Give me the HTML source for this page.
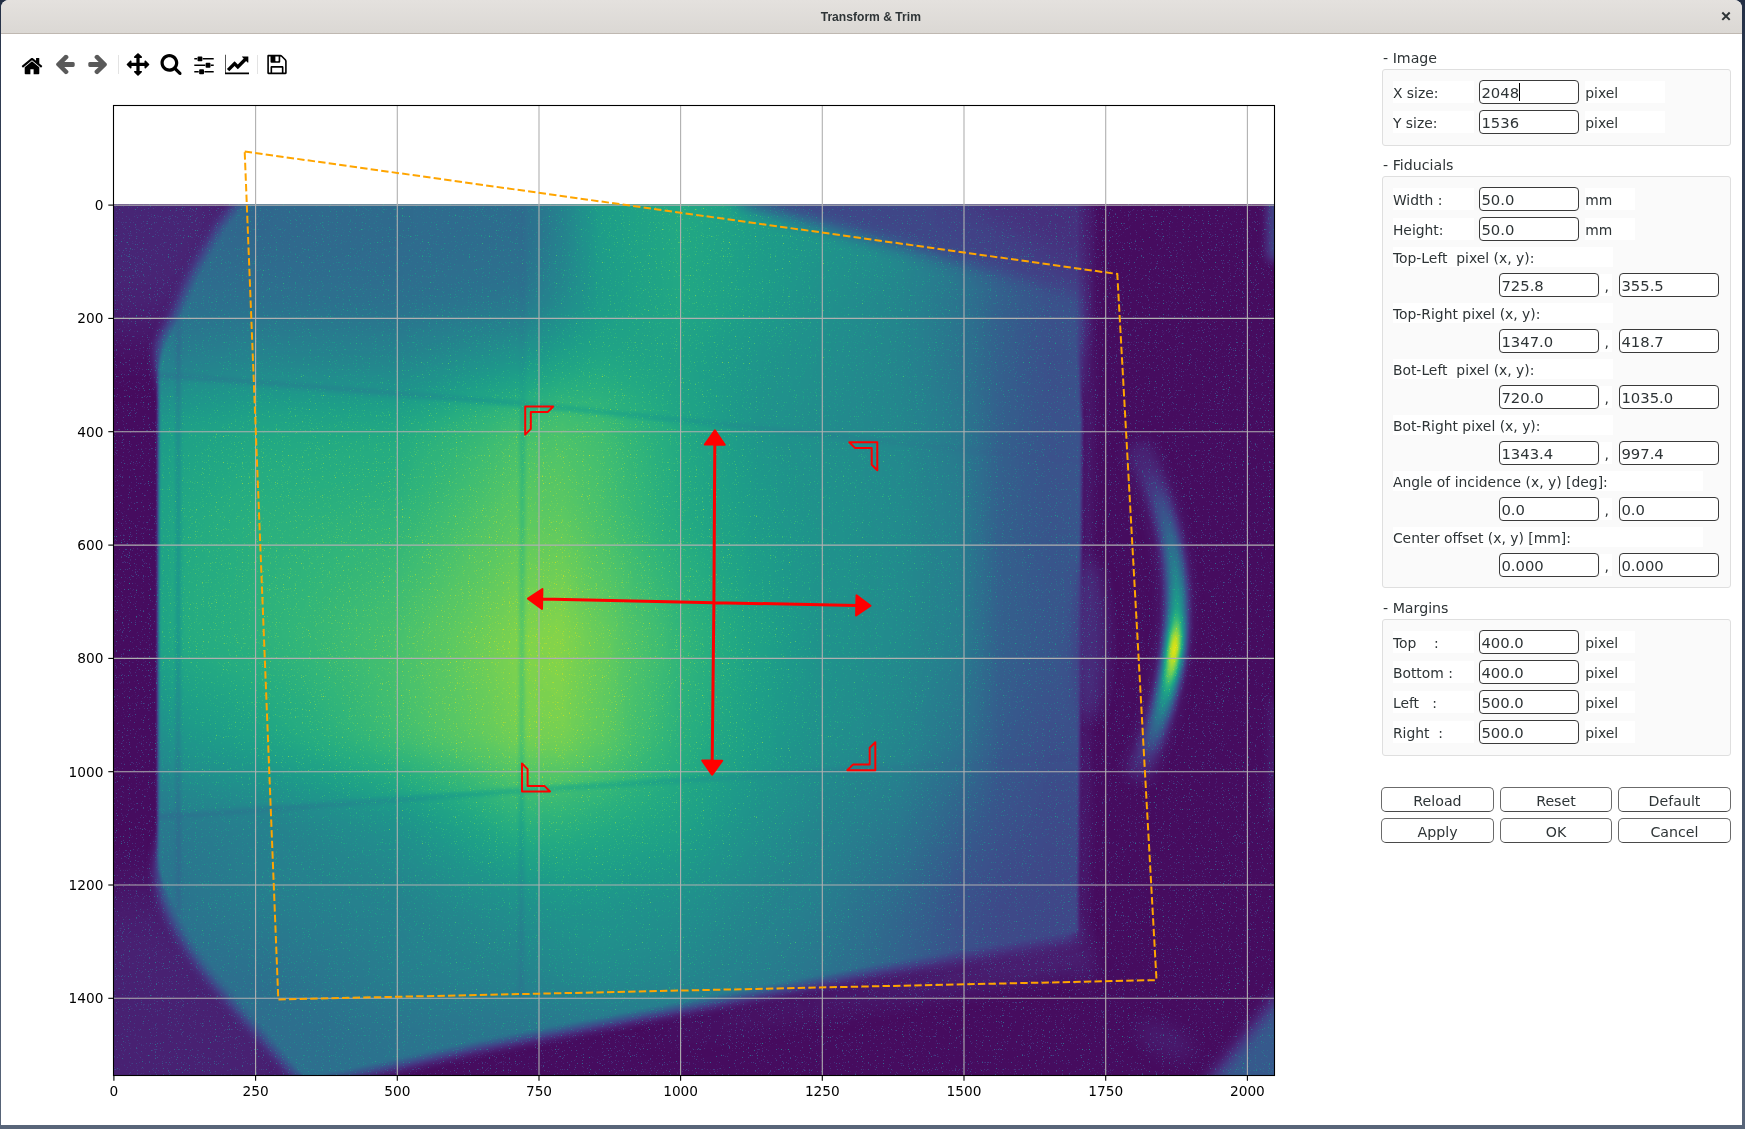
<!DOCTYPE html><html><head><meta charset="utf-8"><title>Transform &amp; Trim</title><style>
*{box-sizing:border-box;margin:0;padding:0}
html,body{width:1745px;height:1129px;overflow:hidden;background:#4f5b70}
body{position:relative;font-family:"DejaVu Sans","Liberation Sans",sans-serif;font-size:14px;color:#2e3436}
.desk{position:absolute;left:0;top:0;width:1745px;height:1129px;background:linear-gradient(180deg,#222e44 0,#2e3a50 60px,#3a475d 600px,#586579 1129px)}
.win{position:absolute;left:1px;top:0;width:1741px;height:1125px;background:#fff;border-radius:8px 8px 0 0;overflow:hidden}
.tb{position:absolute;left:0;top:0;width:100%;height:34px;background:linear-gradient(180deg,#e4e1de,#dbd8d4);border-bottom:1px solid #bfb8b1}
.tt{position:absolute;left:0;width:1741px;top:9.5px;text-align:center;font-family:"Liberation Sans","DejaVu Sans",sans-serif;font-weight:bold;font-size:12.9px;line-height:14px;color:#2e3436;transform:scaleX(.94);transform-origin:869.5px 0}
.plot{position:absolute;left:0;top:0}
.gs{position:absolute;left:0;top:0;width:1745px;height:1129px;opacity:.999}
.ic{position:absolute;top:52px;width:24px;height:24px}
.sep{position:absolute;top:55px;width:1px;height:19px;background:#e3e3e3}
.gt{position:absolute;left:1383px;font-size:14.2px;line-height:18px;white-space:pre}
.fr{position:absolute;left:1382px;width:349px;background:#fafafa;border:1px solid #dfdfdf;border-radius:3px}
.lb{position:absolute;height:22px;line-height:22px;overflow:visible;background:#fff;white-space:pre}
.in{position:absolute;height:24px;width:100px;border:1px solid #3a3a3a;border-radius:4px;background:#fff;line-height:25.6px;padding-left:2px;white-space:pre;font-size:14.4px;overflow:hidden}
.bt{position:absolute;height:25px;border:1px solid #6b6b6b;border-bottom-color:#4a4a4a;border-radius:5px;background:#fff;text-align:center;line-height:24px;font-size:14.2px}
.cur{position:absolute;width:1px;height:18px;background:#000}
</style></head><body><div class="desk"></div><div class="win"></div><div class="tb" style="left:1px;width:1741px;border-radius:8px 8px 0 0"></div><svg style="position:absolute;left:1720px;top:10px" width="12" height="12" viewBox="0 0 12 12"><path d="M2.3,2.5L9.7,9.9M9.7,2.5L2.3,9.9" stroke="#2e3436" stroke-width="2" fill="none"/></svg><svg class="plot" width="1745" height="1129" viewBox="0 0 1745 1129"><defs><filter id="vir" filterUnits="userSpaceOnUse" x="113" y="204" width="1162" height="872" color-interpolation-filters="sRGB"><feTurbulence type="fractalNoise" baseFrequency="0.85" numOctaves="1" seed="7" result="n"/><feColorMatrix in="n" type="matrix" values="5 0 0 0 -3.2  5 0 0 0 -3.2  5 0 0 0 -3.2  0 0 0 0 1" result="nn"/><feComposite in="SourceGraphic" in2="nn" operator="arithmetic" k1="-0.3" k2="1" k3="0.4" k4="0"/><feComponentTransfer><feFuncR type="table" tableValues="0.267 0.277 0.282 0.283 0.279 0.271 0.259 0.245 0.230 0.214 0.199 0.186 0.173 0.161 0.149 0.138 0.128 0.121 0.121 0.132 0.158 0.197 0.246 0.304 0.369 0.440 0.516 0.596 0.678 0.762 0.846 0.926 0.993"/><feFuncG type="table" tableValues="0.005 0.050 0.095 0.136 0.175 0.214 0.252 0.288 0.322 0.356 0.388 0.419 0.449 0.479 0.508 0.537 0.567 0.596 0.626 0.655 0.684 0.712 0.739 0.765 0.789 0.811 0.831 0.849 0.864 0.876 0.887 0.897 0.906"/><feFuncB type="table" tableValues="0.329 0.376 0.417 0.453 0.483 0.507 0.525 0.537 0.546 0.551 0.555 0.557 0.558 0.558 0.557 0.555 0.551 0.544 0.533 0.520 0.502 0.479 0.452 0.420 0.383 0.341 0.294 0.243 0.190 0.137 0.100 0.104 0.144"/></feComponentTransfer></filter><filter id="b2" filterUnits="userSpaceOnUse" x="0" y="100" width="1400" height="1100" color-interpolation-filters="sRGB"><feGaussianBlur stdDeviation="1.8"/></filter><filter id="b4" filterUnits="userSpaceOnUse" x="0" y="100" width="1400" height="1100" color-interpolation-filters="sRGB"><feGaussianBlur stdDeviation="4"/></filter><filter id="b8" filterUnits="userSpaceOnUse" x="0" y="100" width="1400" height="1100" color-interpolation-filters="sRGB"><feGaussianBlur stdDeviation="8"/></filter><filter id="b16" filterUnits="userSpaceOnUse" x="0" y="100" width="1400" height="1100" color-interpolation-filters="sRGB"><feGaussianBlur stdDeviation="16"/></filter><filter id="b30" filterUnits="userSpaceOnUse" x="0" y="100" width="1400" height="1100" color-interpolation-filters="sRGB"><feGaussianBlur stdDeviation="30"/></filter><filter id="bv" filterUnits="userSpaceOnUse" x="0" y="100" width="1400" height="1100" color-interpolation-filters="sRGB"><feGaussianBlur stdDeviation="0 14"/></filter><filter id="b5" filterUnits="userSpaceOnUse" x="0" y="100" width="1400" height="1100" color-interpolation-filters="sRGB"><feGaussianBlur stdDeviation="5"/></filter><filter id="b6" filterUnits="userSpaceOnUse" x="0" y="100" width="1400" height="1100" color-interpolation-filters="sRGB"><feGaussianBlur stdDeviation="6"/></filter><clipPath id="imc"><rect x="113.5" y="204.6" width="1161" height="871"/></clipPath><clipPath id="axc"><rect x="113.5" y="105.5" width="1161" height="970"/></clipPath><clipPath id="wc"><path d="M256,190 L1077,190 L1076.5,330 L1082,420 L1078,932 L874,965 L480,1040.5 L330,1073 L310,1084 L221,976 C208,960 193,939 180,916 C172,899 160,885 158,858 L158.5,372 C160,352 166,344 170,337 L179,320 L188,302 L195,285 L204,267 L215,248 L227,227 Z"/></clipPath><clipPath id="wf"><path d="M246,190 L1084,190 L1083.5,330 L1079,380 L1068,430 L1066,880 L1072,915 L1077,939 L874,972 L480,1047.5 L338,1079 L297,1078 L213,982 C200,966 185,945 172,921 C165,905 158,890 158,868 L160,850 L166,825 L174,800 L174,420 L166,395 L160,372 L158.5,356 C159,345 160,341 161.7,338 L171.5,320.5 L180,302.7 L187.4,285 L196,267 L207,247.8 L219,226.6 Z"/></clipPath><clipPath id="soft"><path d="M90,180 L1300,180 L1300,1100 L90,1100 Z"/></clipPath><linearGradient id="r0" gradientUnits="userSpaceOnUse" x1="150" y1="0" x2="1100" y2="0"><stop offset="0.0000" stop-color="#545454"/><stop offset="0.0211" stop-color="#545454"/><stop offset="0.1158" stop-color="#545454"/><stop offset="0.2632" stop-color="#575757"/><stop offset="0.3895" stop-color="#595959"/><stop offset="0.4316" stop-color="#6e6e6e"/><stop offset="0.4737" stop-color="#8c8c8c"/><stop offset="0.5579" stop-color="#999999"/><stop offset="0.6421" stop-color="#8c8c8c"/><stop offset="0.7074" stop-color="#858585"/><stop offset="0.7895" stop-color="#787878"/><stop offset="0.8526" stop-color="#666666"/><stop offset="0.8947" stop-color="#525252"/><stop offset="0.9474" stop-color="#474747"/><stop offset="1.0000" stop-color="#474747"/></linearGradient><linearGradient id="r1" gradientUnits="userSpaceOnUse" x1="150" y1="0" x2="1100" y2="0"><stop offset="0.0000" stop-color="#545454"/><stop offset="0.0211" stop-color="#545454"/><stop offset="0.1158" stop-color="#545454"/><stop offset="0.2632" stop-color="#575757"/><stop offset="0.3895" stop-color="#595959"/><stop offset="0.4316" stop-color="#6e6e6e"/><stop offset="0.4737" stop-color="#8c8c8c"/><stop offset="0.5579" stop-color="#999999"/><stop offset="0.6421" stop-color="#8c8c8c"/><stop offset="0.7074" stop-color="#858585"/><stop offset="0.7895" stop-color="#787878"/><stop offset="0.8526" stop-color="#666666"/><stop offset="0.8947" stop-color="#525252"/><stop offset="0.9474" stop-color="#474747"/><stop offset="1.0000" stop-color="#474747"/></linearGradient><linearGradient id="r2" gradientUnits="userSpaceOnUse" x1="150" y1="0" x2="1100" y2="0"><stop offset="0.0000" stop-color="#545454"/><stop offset="0.0211" stop-color="#545454"/><stop offset="0.1158" stop-color="#545454"/><stop offset="0.2632" stop-color="#575757"/><stop offset="0.3895" stop-color="#595959"/><stop offset="0.4316" stop-color="#6e6e6e"/><stop offset="0.4737" stop-color="#8c8c8c"/><stop offset="0.5579" stop-color="#999999"/><stop offset="0.6421" stop-color="#8c8c8c"/><stop offset="0.7074" stop-color="#858585"/><stop offset="0.7895" stop-color="#787878"/><stop offset="0.8526" stop-color="#666666"/><stop offset="0.8947" stop-color="#525252"/><stop offset="0.9474" stop-color="#474747"/><stop offset="1.0000" stop-color="#474747"/></linearGradient><linearGradient id="r3" gradientUnits="userSpaceOnUse" x1="150" y1="0" x2="1100" y2="0"><stop offset="0.0000" stop-color="#545454"/><stop offset="0.0211" stop-color="#545454"/><stop offset="0.1158" stop-color="#545454"/><stop offset="0.2632" stop-color="#575757"/><stop offset="0.3895" stop-color="#595959"/><stop offset="0.4316" stop-color="#6e6e6e"/><stop offset="0.4737" stop-color="#8c8c8c"/><stop offset="0.5579" stop-color="#999999"/><stop offset="0.6421" stop-color="#8c8c8c"/><stop offset="0.7074" stop-color="#858585"/><stop offset="0.7895" stop-color="#787878"/><stop offset="0.8526" stop-color="#666666"/><stop offset="0.8947" stop-color="#525252"/><stop offset="0.9474" stop-color="#474747"/><stop offset="1.0000" stop-color="#474747"/></linearGradient><linearGradient id="r4" gradientUnits="userSpaceOnUse" x1="150" y1="0" x2="1100" y2="0"><stop offset="0.0000" stop-color="#565656"/><stop offset="0.0211" stop-color="#565656"/><stop offset="0.1158" stop-color="#575757"/><stop offset="0.2632" stop-color="#585858"/><stop offset="0.3895" stop-color="#5c5c5c"/><stop offset="0.4316" stop-color="#707070"/><stop offset="0.4737" stop-color="#8b8b8b"/><stop offset="0.5579" stop-color="#999999"/><stop offset="0.6421" stop-color="#8c8c8c"/><stop offset="0.7074" stop-color="#838383"/><stop offset="0.7895" stop-color="#767676"/><stop offset="0.8526" stop-color="#646464"/><stop offset="0.8947" stop-color="#505050"/><stop offset="0.9474" stop-color="#454545"/><stop offset="1.0000" stop-color="#454545"/></linearGradient><linearGradient id="r5" gradientUnits="userSpaceOnUse" x1="150" y1="0" x2="1100" y2="0"><stop offset="0.0000" stop-color="#585858"/><stop offset="0.0211" stop-color="#585858"/><stop offset="0.1158" stop-color="#5a5a5a"/><stop offset="0.2632" stop-color="#5a5a5a"/><stop offset="0.3895" stop-color="#5f5f5f"/><stop offset="0.4316" stop-color="#737373"/><stop offset="0.4737" stop-color="#8a8a8a"/><stop offset="0.5579" stop-color="#999999"/><stop offset="0.6421" stop-color="#8c8c8c"/><stop offset="0.7074" stop-color="#818181"/><stop offset="0.7895" stop-color="#747474"/><stop offset="0.8526" stop-color="#626262"/><stop offset="0.8947" stop-color="#4e4e4e"/><stop offset="0.9474" stop-color="#424242"/><stop offset="1.0000" stop-color="#424242"/></linearGradient><linearGradient id="r6" gradientUnits="userSpaceOnUse" x1="150" y1="0" x2="1100" y2="0"><stop offset="0.0000" stop-color="#5c5c5c"/><stop offset="0.0211" stop-color="#5c5c5c"/><stop offset="0.1158" stop-color="#5f5f5f"/><stop offset="0.2632" stop-color="#5f5f5f"/><stop offset="0.3895" stop-color="#666666"/><stop offset="0.4316" stop-color="#797979"/><stop offset="0.4737" stop-color="#8b8b8b"/><stop offset="0.5579" stop-color="#989898"/><stop offset="0.6421" stop-color="#8b8b8b"/><stop offset="0.7074" stop-color="#7f7f7f"/><stop offset="0.7895" stop-color="#737373"/><stop offset="0.8526" stop-color="#616161"/><stop offset="0.8947" stop-color="#4c4c4c"/><stop offset="0.9474" stop-color="#3f3f3f"/><stop offset="1.0000" stop-color="#3f3f3f"/></linearGradient><linearGradient id="r7" gradientUnits="userSpaceOnUse" x1="150" y1="0" x2="1100" y2="0"><stop offset="0.0000" stop-color="#636363"/><stop offset="0.0211" stop-color="#636363"/><stop offset="0.1158" stop-color="#686868"/><stop offset="0.2632" stop-color="#686868"/><stop offset="0.3895" stop-color="#747474"/><stop offset="0.4316" stop-color="#848484"/><stop offset="0.4737" stop-color="#909090"/><stop offset="0.5579" stop-color="#959595"/><stop offset="0.6421" stop-color="#888888"/><stop offset="0.7074" stop-color="#7e7e7e"/><stop offset="0.7895" stop-color="#737373"/><stop offset="0.8526" stop-color="#616161"/><stop offset="0.8947" stop-color="#4c4c4c"/><stop offset="0.9474" stop-color="#3e3e3e"/><stop offset="1.0000" stop-color="#3e3e3e"/></linearGradient><linearGradient id="r8" gradientUnits="userSpaceOnUse" x1="150" y1="0" x2="1100" y2="0"><stop offset="0.0000" stop-color="#6a6a6a"/><stop offset="0.0211" stop-color="#6a6a6a"/><stop offset="0.1158" stop-color="#717171"/><stop offset="0.2632" stop-color="#717171"/><stop offset="0.3895" stop-color="#828282"/><stop offset="0.4316" stop-color="#8f8f8f"/><stop offset="0.4737" stop-color="#969696"/><stop offset="0.5579" stop-color="#929292"/><stop offset="0.6421" stop-color="#858585"/><stop offset="0.7074" stop-color="#7d7d7d"/><stop offset="0.7895" stop-color="#737373"/><stop offset="0.8526" stop-color="#616161"/><stop offset="0.8947" stop-color="#4c4c4c"/><stop offset="0.9474" stop-color="#3d3d3d"/><stop offset="1.0000" stop-color="#3d3d3d"/></linearGradient><linearGradient id="r9" gradientUnits="userSpaceOnUse" x1="150" y1="0" x2="1100" y2="0"><stop offset="0.0000" stop-color="#747474"/><stop offset="0.0211" stop-color="#757575"/><stop offset="0.1158" stop-color="#7c7c7c"/><stop offset="0.2632" stop-color="#7d7d7d"/><stop offset="0.3895" stop-color="#919191"/><stop offset="0.4316" stop-color="#9b9b9b"/><stop offset="0.4737" stop-color="#9d9d9d"/><stop offset="0.5579" stop-color="#939393"/><stop offset="0.6421" stop-color="#848484"/><stop offset="0.7074" stop-color="#7c7c7c"/><stop offset="0.7895" stop-color="#737373"/><stop offset="0.8526" stop-color="#626262"/><stop offset="0.8947" stop-color="#4c4c4c"/><stop offset="0.9474" stop-color="#3e3e3e"/><stop offset="1.0000" stop-color="#3e3e3e"/></linearGradient><linearGradient id="r10" gradientUnits="userSpaceOnUse" x1="150" y1="0" x2="1100" y2="0"><stop offset="0.0000" stop-color="#7e7e7e"/><stop offset="0.0211" stop-color="#808080"/><stop offset="0.1158" stop-color="#888888"/><stop offset="0.2632" stop-color="#898989"/><stop offset="0.3895" stop-color="#a0a0a0"/><stop offset="0.4316" stop-color="#a6a6a6"/><stop offset="0.4737" stop-color="#a5a5a5"/><stop offset="0.5579" stop-color="#959595"/><stop offset="0.6421" stop-color="#838383"/><stop offset="0.7074" stop-color="#7b7b7b"/><stop offset="0.7895" stop-color="#747474"/><stop offset="0.8526" stop-color="#646464"/><stop offset="0.8947" stop-color="#4c4c4c"/><stop offset="0.9474" stop-color="#3f3f3f"/><stop offset="1.0000" stop-color="#3f3f3f"/></linearGradient><linearGradient id="r11" gradientUnits="userSpaceOnUse" x1="150" y1="0" x2="1100" y2="0"><stop offset="0.0000" stop-color="#898989"/><stop offset="0.0211" stop-color="#8b8b8b"/><stop offset="0.1158" stop-color="#939393"/><stop offset="0.2632" stop-color="#959595"/><stop offset="0.3895" stop-color="#afafaf"/><stop offset="0.4316" stop-color="#b2b2b2"/><stop offset="0.4737" stop-color="#adadad"/><stop offset="0.5579" stop-color="#969696"/><stop offset="0.6421" stop-color="#828282"/><stop offset="0.7074" stop-color="#7a7a7a"/><stop offset="0.7895" stop-color="#757575"/><stop offset="0.8526" stop-color="#666666"/><stop offset="0.8947" stop-color="#4c4c4c"/><stop offset="0.9474" stop-color="#404040"/><stop offset="1.0000" stop-color="#404040"/></linearGradient><linearGradient id="r12" gradientUnits="userSpaceOnUse" x1="150" y1="0" x2="1100" y2="0"><stop offset="0.0000" stop-color="#8c8c8c"/><stop offset="0.0211" stop-color="#8e8e8e"/><stop offset="0.1158" stop-color="#969696"/><stop offset="0.2632" stop-color="#9a9a9a"/><stop offset="0.3895" stop-color="#b3b3b3"/><stop offset="0.4316" stop-color="#b5b5b5"/><stop offset="0.4737" stop-color="#afafaf"/><stop offset="0.5579" stop-color="#979797"/><stop offset="0.6421" stop-color="#838383"/><stop offset="0.7074" stop-color="#7c7c7c"/><stop offset="0.7895" stop-color="#767676"/><stop offset="0.8526" stop-color="#676767"/><stop offset="0.8947" stop-color="#4c4c4c"/><stop offset="0.9474" stop-color="#404040"/><stop offset="1.0000" stop-color="#404040"/></linearGradient><linearGradient id="r13" gradientUnits="userSpaceOnUse" x1="150" y1="0" x2="1100" y2="0"><stop offset="0.0000" stop-color="#8e8e8e"/><stop offset="0.0211" stop-color="#909090"/><stop offset="0.1158" stop-color="#999999"/><stop offset="0.2632" stop-color="#9d9d9d"/><stop offset="0.3895" stop-color="#b6b6b6"/><stop offset="0.4316" stop-color="#b8b8b8"/><stop offset="0.4737" stop-color="#b0b0b0"/><stop offset="0.5579" stop-color="#989898"/><stop offset="0.6421" stop-color="#858585"/><stop offset="0.7074" stop-color="#7d7d7d"/><stop offset="0.7895" stop-color="#777777"/><stop offset="0.8526" stop-color="#696969"/><stop offset="0.8947" stop-color="#4c4c4c"/><stop offset="0.9474" stop-color="#414141"/><stop offset="1.0000" stop-color="#414141"/></linearGradient><linearGradient id="r14" gradientUnits="userSpaceOnUse" x1="150" y1="0" x2="1100" y2="0"><stop offset="0.0000" stop-color="#909090"/><stop offset="0.0211" stop-color="#929292"/><stop offset="0.1158" stop-color="#9c9c9c"/><stop offset="0.2632" stop-color="#a0a0a0"/><stop offset="0.3895" stop-color="#bababa"/><stop offset="0.4316" stop-color="#bababa"/><stop offset="0.4737" stop-color="#b1b1b1"/><stop offset="0.5579" stop-color="#989898"/><stop offset="0.6421" stop-color="#868686"/><stop offset="0.7074" stop-color="#7e7e7e"/><stop offset="0.7895" stop-color="#777777"/><stop offset="0.8526" stop-color="#6a6a6a"/><stop offset="0.8947" stop-color="#4c4c4c"/><stop offset="0.9474" stop-color="#424242"/><stop offset="1.0000" stop-color="#424242"/></linearGradient><linearGradient id="r15" gradientUnits="userSpaceOnUse" x1="150" y1="0" x2="1100" y2="0"><stop offset="0.0000" stop-color="#919191"/><stop offset="0.0211" stop-color="#949494"/><stop offset="0.1158" stop-color="#9e9e9e"/><stop offset="0.2632" stop-color="#a4a4a4"/><stop offset="0.3895" stop-color="#bdbdbd"/><stop offset="0.4316" stop-color="#bdbdbd"/><stop offset="0.4737" stop-color="#b3b3b3"/><stop offset="0.5579" stop-color="#999999"/><stop offset="0.6421" stop-color="#878787"/><stop offset="0.7074" stop-color="#808080"/><stop offset="0.7895" stop-color="#787878"/><stop offset="0.8526" stop-color="#6b6b6b"/><stop offset="0.8947" stop-color="#4c4c4c"/><stop offset="0.9474" stop-color="#424242"/><stop offset="1.0000" stop-color="#424242"/></linearGradient><linearGradient id="r16" gradientUnits="userSpaceOnUse" x1="150" y1="0" x2="1100" y2="0"><stop offset="0.0000" stop-color="#929292"/><stop offset="0.0211" stop-color="#949494"/><stop offset="0.1158" stop-color="#9f9f9f"/><stop offset="0.2632" stop-color="#a7a7a7"/><stop offset="0.3895" stop-color="#c0c0c0"/><stop offset="0.4316" stop-color="#c1c1c1"/><stop offset="0.4737" stop-color="#b6b6b6"/><stop offset="0.5579" stop-color="#9c9c9c"/><stop offset="0.6421" stop-color="#898989"/><stop offset="0.7074" stop-color="#808080"/><stop offset="0.7895" stop-color="#787878"/><stop offset="0.8526" stop-color="#6b6b6b"/><stop offset="0.8947" stop-color="#4c4c4c"/><stop offset="0.9474" stop-color="#434343"/><stop offset="1.0000" stop-color="#434343"/></linearGradient><linearGradient id="r17" gradientUnits="userSpaceOnUse" x1="150" y1="0" x2="1100" y2="0"><stop offset="0.0000" stop-color="#929292"/><stop offset="0.0211" stop-color="#959595"/><stop offset="0.1158" stop-color="#9f9f9f"/><stop offset="0.2632" stop-color="#aaaaaa"/><stop offset="0.3895" stop-color="#c3c3c3"/><stop offset="0.4316" stop-color="#c4c4c4"/><stop offset="0.4737" stop-color="#b9b9b9"/><stop offset="0.5579" stop-color="#9f9f9f"/><stop offset="0.6421" stop-color="#8a8a8a"/><stop offset="0.7074" stop-color="#808080"/><stop offset="0.7895" stop-color="#787878"/><stop offset="0.8526" stop-color="#6b6b6b"/><stop offset="0.8947" stop-color="#4c4c4c"/><stop offset="0.9474" stop-color="#434343"/><stop offset="1.0000" stop-color="#434343"/></linearGradient><linearGradient id="r18" gradientUnits="userSpaceOnUse" x1="150" y1="0" x2="1100" y2="0"><stop offset="0.0000" stop-color="#939393"/><stop offset="0.0211" stop-color="#969696"/><stop offset="0.1158" stop-color="#a0a0a0"/><stop offset="0.2632" stop-color="#adadad"/><stop offset="0.3895" stop-color="#c6c6c6"/><stop offset="0.4316" stop-color="#c8c8c8"/><stop offset="0.4737" stop-color="#bcbcbc"/><stop offset="0.5579" stop-color="#a1a1a1"/><stop offset="0.6421" stop-color="#8c8c8c"/><stop offset="0.7074" stop-color="#808080"/><stop offset="0.7895" stop-color="#787878"/><stop offset="0.8526" stop-color="#6b6b6b"/><stop offset="0.8947" stop-color="#4c4c4c"/><stop offset="0.9474" stop-color="#444444"/><stop offset="1.0000" stop-color="#444444"/></linearGradient><linearGradient id="r19" gradientUnits="userSpaceOnUse" x1="150" y1="0" x2="1100" y2="0"><stop offset="0.0000" stop-color="#939393"/><stop offset="0.0211" stop-color="#969696"/><stop offset="0.1158" stop-color="#a0a0a0"/><stop offset="0.2632" stop-color="#b0b0b0"/><stop offset="0.3895" stop-color="#c9c9c9"/><stop offset="0.4316" stop-color="#cccccc"/><stop offset="0.4737" stop-color="#bfbfbf"/><stop offset="0.5579" stop-color="#a4a4a4"/><stop offset="0.6421" stop-color="#8e8e8e"/><stop offset="0.7074" stop-color="#808080"/><stop offset="0.7895" stop-color="#787878"/><stop offset="0.8526" stop-color="#6b6b6b"/><stop offset="0.8947" stop-color="#4c4c4c"/><stop offset="0.9474" stop-color="#444444"/><stop offset="1.0000" stop-color="#444444"/></linearGradient><linearGradient id="r20" gradientUnits="userSpaceOnUse" x1="150" y1="0" x2="1100" y2="0"><stop offset="0.0000" stop-color="#939393"/><stop offset="0.0211" stop-color="#969696"/><stop offset="0.1158" stop-color="#a0a0a0"/><stop offset="0.2632" stop-color="#b2b2b2"/><stop offset="0.3895" stop-color="#cccccc"/><stop offset="0.4316" stop-color="#cecece"/><stop offset="0.4737" stop-color="#c2c2c2"/><stop offset="0.5579" stop-color="#a5a5a5"/><stop offset="0.6421" stop-color="#8f8f8f"/><stop offset="0.7074" stop-color="#7f7f7f"/><stop offset="0.7895" stop-color="#787878"/><stop offset="0.8526" stop-color="#6b6b6b"/><stop offset="0.8947" stop-color="#4c4c4c"/><stop offset="0.9474" stop-color="#454545"/><stop offset="1.0000" stop-color="#454545"/></linearGradient><linearGradient id="r21" gradientUnits="userSpaceOnUse" x1="150" y1="0" x2="1100" y2="0"><stop offset="0.0000" stop-color="#8d8d8d"/><stop offset="0.0211" stop-color="#909090"/><stop offset="0.1158" stop-color="#9c9c9c"/><stop offset="0.2632" stop-color="#b1b1b1"/><stop offset="0.3895" stop-color="#cbcbcb"/><stop offset="0.4316" stop-color="#cccccc"/><stop offset="0.4737" stop-color="#c0c0c0"/><stop offset="0.5579" stop-color="#a4a4a4"/><stop offset="0.6421" stop-color="#8d8d8d"/><stop offset="0.7074" stop-color="#7f7f7f"/><stop offset="0.7895" stop-color="#767676"/><stop offset="0.8526" stop-color="#686868"/><stop offset="0.8947" stop-color="#4b4b4b"/><stop offset="0.9474" stop-color="#434343"/><stop offset="1.0000" stop-color="#434343"/></linearGradient><linearGradient id="r22" gradientUnits="userSpaceOnUse" x1="150" y1="0" x2="1100" y2="0"><stop offset="0.0000" stop-color="#878787"/><stop offset="0.0211" stop-color="#8b8b8b"/><stop offset="0.1158" stop-color="#979797"/><stop offset="0.2632" stop-color="#b0b0b0"/><stop offset="0.3895" stop-color="#c9c9c9"/><stop offset="0.4316" stop-color="#cbcbcb"/><stop offset="0.4737" stop-color="#bfbfbf"/><stop offset="0.5579" stop-color="#a2a2a2"/><stop offset="0.6421" stop-color="#8c8c8c"/><stop offset="0.7074" stop-color="#7e7e7e"/><stop offset="0.7895" stop-color="#757575"/><stop offset="0.8526" stop-color="#666666"/><stop offset="0.8947" stop-color="#4a4a4a"/><stop offset="0.9474" stop-color="#414141"/><stop offset="1.0000" stop-color="#414141"/></linearGradient><linearGradient id="r23" gradientUnits="userSpaceOnUse" x1="150" y1="0" x2="1100" y2="0"><stop offset="0.0000" stop-color="#818181"/><stop offset="0.0211" stop-color="#858585"/><stop offset="0.1158" stop-color="#939393"/><stop offset="0.2632" stop-color="#afafaf"/><stop offset="0.3895" stop-color="#c8c8c8"/><stop offset="0.4316" stop-color="#c9c9c9"/><stop offset="0.4737" stop-color="#bebebe"/><stop offset="0.5579" stop-color="#a0a0a0"/><stop offset="0.6421" stop-color="#8b8b8b"/><stop offset="0.7074" stop-color="#7e7e7e"/><stop offset="0.7895" stop-color="#747474"/><stop offset="0.8526" stop-color="#636363"/><stop offset="0.8947" stop-color="#494949"/><stop offset="0.9474" stop-color="#3f3f3f"/><stop offset="1.0000" stop-color="#3f3f3f"/></linearGradient><linearGradient id="r24" gradientUnits="userSpaceOnUse" x1="150" y1="0" x2="1100" y2="0"><stop offset="0.0000" stop-color="#7a7a7a"/><stop offset="0.0211" stop-color="#808080"/><stop offset="0.1158" stop-color="#8f8f8f"/><stop offset="0.2632" stop-color="#adadad"/><stop offset="0.3895" stop-color="#c7c7c7"/><stop offset="0.4316" stop-color="#c7c7c7"/><stop offset="0.4737" stop-color="#bdbdbd"/><stop offset="0.5579" stop-color="#9e9e9e"/><stop offset="0.6421" stop-color="#8a8a8a"/><stop offset="0.7074" stop-color="#7d7d7d"/><stop offset="0.7895" stop-color="#737373"/><stop offset="0.8526" stop-color="#616161"/><stop offset="0.8947" stop-color="#474747"/><stop offset="0.9474" stop-color="#3d3d3d"/><stop offset="1.0000" stop-color="#3d3d3d"/></linearGradient><linearGradient id="r25" gradientUnits="userSpaceOnUse" x1="150" y1="0" x2="1100" y2="0"><stop offset="0.0000" stop-color="#747474"/><stop offset="0.0211" stop-color="#787878"/><stop offset="0.1158" stop-color="#858585"/><stop offset="0.2632" stop-color="#a0a0a0"/><stop offset="0.3895" stop-color="#bcbcbc"/><stop offset="0.4316" stop-color="#bcbcbc"/><stop offset="0.4737" stop-color="#b4b4b4"/><stop offset="0.5579" stop-color="#9b9b9b"/><stop offset="0.6421" stop-color="#878787"/><stop offset="0.7074" stop-color="#7a7a7a"/><stop offset="0.7895" stop-color="#6f6f6f"/><stop offset="0.8526" stop-color="#5b5b5b"/><stop offset="0.8947" stop-color="#454545"/><stop offset="0.9474" stop-color="#3c3c3c"/><stop offset="1.0000" stop-color="#3c3c3c"/></linearGradient><linearGradient id="r26" gradientUnits="userSpaceOnUse" x1="150" y1="0" x2="1100" y2="0"><stop offset="0.0000" stop-color="#6e6e6e"/><stop offset="0.0211" stop-color="#707070"/><stop offset="0.1158" stop-color="#7b7b7b"/><stop offset="0.2632" stop-color="#939393"/><stop offset="0.3895" stop-color="#b1b1b1"/><stop offset="0.4316" stop-color="#b1b1b1"/><stop offset="0.4737" stop-color="#aaaaaa"/><stop offset="0.5579" stop-color="#989898"/><stop offset="0.6421" stop-color="#848484"/><stop offset="0.7074" stop-color="#777777"/><stop offset="0.7895" stop-color="#6b6b6b"/><stop offset="0.8526" stop-color="#555555"/><stop offset="0.8947" stop-color="#434343"/><stop offset="0.9474" stop-color="#3a3a3a"/><stop offset="1.0000" stop-color="#3a3a3a"/></linearGradient><linearGradient id="r27" gradientUnits="userSpaceOnUse" x1="150" y1="0" x2="1100" y2="0"><stop offset="0.0000" stop-color="#686868"/><stop offset="0.0211" stop-color="#696969"/><stop offset="0.1158" stop-color="#717171"/><stop offset="0.2632" stop-color="#868686"/><stop offset="0.3895" stop-color="#a7a7a7"/><stop offset="0.4316" stop-color="#a7a7a7"/><stop offset="0.4737" stop-color="#a1a1a1"/><stop offset="0.5579" stop-color="#959595"/><stop offset="0.6421" stop-color="#818181"/><stop offset="0.7074" stop-color="#747474"/><stop offset="0.7895" stop-color="#676767"/><stop offset="0.8526" stop-color="#4f4f4f"/><stop offset="0.8947" stop-color="#414141"/><stop offset="0.9474" stop-color="#393939"/><stop offset="1.0000" stop-color="#393939"/></linearGradient><linearGradient id="r28" gradientUnits="userSpaceOnUse" x1="150" y1="0" x2="1100" y2="0"><stop offset="0.0000" stop-color="#656565"/><stop offset="0.0211" stop-color="#656565"/><stop offset="0.1158" stop-color="#6d6d6d"/><stop offset="0.2632" stop-color="#7e7e7e"/><stop offset="0.3895" stop-color="#9c9c9c"/><stop offset="0.4316" stop-color="#9d9d9d"/><stop offset="0.4737" stop-color="#999999"/><stop offset="0.5579" stop-color="#909090"/><stop offset="0.6421" stop-color="#7d7d7d"/><stop offset="0.7074" stop-color="#717171"/><stop offset="0.7895" stop-color="#626262"/><stop offset="0.8526" stop-color="#4a4a4a"/><stop offset="0.8947" stop-color="#3e3e3e"/><stop offset="0.9474" stop-color="#383838"/><stop offset="1.0000" stop-color="#383838"/></linearGradient><linearGradient id="r29" gradientUnits="userSpaceOnUse" x1="150" y1="0" x2="1100" y2="0"><stop offset="0.0000" stop-color="#636363"/><stop offset="0.0211" stop-color="#636363"/><stop offset="0.1158" stop-color="#6c6c6c"/><stop offset="0.2632" stop-color="#797979"/><stop offset="0.3895" stop-color="#919191"/><stop offset="0.4316" stop-color="#949494"/><stop offset="0.4737" stop-color="#919191"/><stop offset="0.5579" stop-color="#8a8a8a"/><stop offset="0.6421" stop-color="#797979"/><stop offset="0.7074" stop-color="#6f6f6f"/><stop offset="0.7895" stop-color="#5d5d5d"/><stop offset="0.8526" stop-color="#464646"/><stop offset="0.8947" stop-color="#3c3c3c"/><stop offset="0.9474" stop-color="#373737"/><stop offset="1.0000" stop-color="#373737"/></linearGradient><linearGradient id="r30" gradientUnits="userSpaceOnUse" x1="150" y1="0" x2="1100" y2="0"><stop offset="0.0000" stop-color="#626262"/><stop offset="0.0211" stop-color="#626262"/><stop offset="0.1158" stop-color="#6c6c6c"/><stop offset="0.2632" stop-color="#747474"/><stop offset="0.3895" stop-color="#878787"/><stop offset="0.4316" stop-color="#8b8b8b"/><stop offset="0.4737" stop-color="#8a8a8a"/><stop offset="0.5579" stop-color="#848484"/><stop offset="0.6421" stop-color="#757575"/><stop offset="0.7074" stop-color="#6d6d6d"/><stop offset="0.7895" stop-color="#585858"/><stop offset="0.8526" stop-color="#424242"/><stop offset="0.8947" stop-color="#3a3a3a"/><stop offset="0.9474" stop-color="#363636"/><stop offset="1.0000" stop-color="#363636"/></linearGradient><linearGradient id="r31" gradientUnits="userSpaceOnUse" x1="150" y1="0" x2="1100" y2="0"><stop offset="0.0000" stop-color="#606060"/><stop offset="0.0211" stop-color="#606060"/><stop offset="0.1158" stop-color="#6a6a6a"/><stop offset="0.2632" stop-color="#707070"/><stop offset="0.3895" stop-color="#7e7e7e"/><stop offset="0.4316" stop-color="#838383"/><stop offset="0.4737" stop-color="#838383"/><stop offset="0.5579" stop-color="#7e7e7e"/><stop offset="0.6421" stop-color="#727272"/><stop offset="0.7074" stop-color="#6a6a6a"/><stop offset="0.7895" stop-color="#535353"/><stop offset="0.8526" stop-color="#3f3f3f"/><stop offset="0.8947" stop-color="#383838"/><stop offset="0.9474" stop-color="#363636"/><stop offset="1.0000" stop-color="#363636"/></linearGradient><linearGradient id="r32" gradientUnits="userSpaceOnUse" x1="150" y1="0" x2="1100" y2="0"><stop offset="0.0000" stop-color="#5e5e5e"/><stop offset="0.0211" stop-color="#5e5e5e"/><stop offset="0.1158" stop-color="#666666"/><stop offset="0.2632" stop-color="#6e6e6e"/><stop offset="0.3895" stop-color="#797979"/><stop offset="0.4316" stop-color="#7e7e7e"/><stop offset="0.4737" stop-color="#808080"/><stop offset="0.5579" stop-color="#7b7b7b"/><stop offset="0.6421" stop-color="#707070"/><stop offset="0.7074" stop-color="#676767"/><stop offset="0.7895" stop-color="#515151"/><stop offset="0.8526" stop-color="#3f3f3f"/><stop offset="0.8947" stop-color="#383838"/><stop offset="0.9474" stop-color="#363636"/><stop offset="1.0000" stop-color="#363636"/></linearGradient><linearGradient id="r33" gradientUnits="userSpaceOnUse" x1="150" y1="0" x2="1100" y2="0"><stop offset="0.0000" stop-color="#5c5c5c"/><stop offset="0.0211" stop-color="#5c5c5c"/><stop offset="0.1158" stop-color="#626262"/><stop offset="0.2632" stop-color="#6d6d6d"/><stop offset="0.3895" stop-color="#757575"/><stop offset="0.4316" stop-color="#7a7a7a"/><stop offset="0.4737" stop-color="#7c7c7c"/><stop offset="0.5579" stop-color="#787878"/><stop offset="0.6421" stop-color="#6d6d6d"/><stop offset="0.7074" stop-color="#646464"/><stop offset="0.7895" stop-color="#4f4f4f"/><stop offset="0.8526" stop-color="#3e3e3e"/><stop offset="0.8947" stop-color="#383838"/><stop offset="0.9474" stop-color="#363636"/><stop offset="1.0000" stop-color="#363636"/></linearGradient><linearGradient id="r34" gradientUnits="userSpaceOnUse" x1="150" y1="0" x2="1100" y2="0"><stop offset="0.0000" stop-color="#595959"/><stop offset="0.0211" stop-color="#595959"/><stop offset="0.1158" stop-color="#5e5e5e"/><stop offset="0.2632" stop-color="#6b6b6b"/><stop offset="0.3895" stop-color="#707070"/><stop offset="0.4316" stop-color="#757575"/><stop offset="0.4737" stop-color="#787878"/><stop offset="0.5579" stop-color="#757575"/><stop offset="0.6421" stop-color="#6b6b6b"/><stop offset="0.7074" stop-color="#616161"/><stop offset="0.7895" stop-color="#4c4c4c"/><stop offset="0.8526" stop-color="#3d3d3d"/><stop offset="0.8947" stop-color="#383838"/><stop offset="0.9474" stop-color="#363636"/><stop offset="1.0000" stop-color="#363636"/></linearGradient><linearGradient id="r35" gradientUnits="userSpaceOnUse" x1="150" y1="0" x2="1100" y2="0"><stop offset="0.0000" stop-color="#595959"/><stop offset="0.0211" stop-color="#595959"/><stop offset="0.1158" stop-color="#5c5c5c"/><stop offset="0.2632" stop-color="#676767"/><stop offset="0.3895" stop-color="#6a6a6a"/><stop offset="0.4316" stop-color="#6d6d6d"/><stop offset="0.4737" stop-color="#6f6f6f"/><stop offset="0.5579" stop-color="#6d6d6d"/><stop offset="0.6421" stop-color="#676767"/><stop offset="0.7074" stop-color="#5e5e5e"/><stop offset="0.7895" stop-color="#4c4c4c"/><stop offset="0.8526" stop-color="#3d3d3d"/><stop offset="0.8947" stop-color="#383838"/><stop offset="0.9474" stop-color="#363636"/><stop offset="1.0000" stop-color="#363636"/></linearGradient><linearGradient id="r36" gradientUnits="userSpaceOnUse" x1="150" y1="0" x2="1100" y2="0"><stop offset="0.0000" stop-color="#595959"/><stop offset="0.0211" stop-color="#595959"/><stop offset="0.1158" stop-color="#5a5a5a"/><stop offset="0.2632" stop-color="#636363"/><stop offset="0.3895" stop-color="#646464"/><stop offset="0.4316" stop-color="#656565"/><stop offset="0.4737" stop-color="#656565"/><stop offset="0.5579" stop-color="#656565"/><stop offset="0.6421" stop-color="#636363"/><stop offset="0.7074" stop-color="#5b5b5b"/><stop offset="0.7895" stop-color="#4c4c4c"/><stop offset="0.8526" stop-color="#3d3d3d"/><stop offset="0.8947" stop-color="#383838"/><stop offset="0.9474" stop-color="#363636"/><stop offset="1.0000" stop-color="#363636"/></linearGradient><linearGradient id="r37" gradientUnits="userSpaceOnUse" x1="150" y1="0" x2="1100" y2="0"><stop offset="0.0000" stop-color="#595959"/><stop offset="0.0211" stop-color="#595959"/><stop offset="0.1158" stop-color="#595959"/><stop offset="0.2632" stop-color="#616161"/><stop offset="0.3895" stop-color="#616161"/><stop offset="0.4316" stop-color="#616161"/><stop offset="0.4737" stop-color="#616161"/><stop offset="0.5579" stop-color="#616161"/><stop offset="0.6421" stop-color="#616161"/><stop offset="0.7074" stop-color="#595959"/><stop offset="0.7895" stop-color="#4c4c4c"/><stop offset="0.8526" stop-color="#3d3d3d"/><stop offset="0.8947" stop-color="#383838"/><stop offset="0.9474" stop-color="#363636"/><stop offset="1.0000" stop-color="#363636"/></linearGradient><linearGradient id="r38" gradientUnits="userSpaceOnUse" x1="150" y1="0" x2="1100" y2="0"><stop offset="0.0000" stop-color="#595959"/><stop offset="0.0211" stop-color="#595959"/><stop offset="0.1158" stop-color="#595959"/><stop offset="0.2632" stop-color="#616161"/><stop offset="0.3895" stop-color="#616161"/><stop offset="0.4316" stop-color="#616161"/><stop offset="0.4737" stop-color="#616161"/><stop offset="0.5579" stop-color="#616161"/><stop offset="0.6421" stop-color="#616161"/><stop offset="0.7074" stop-color="#595959"/><stop offset="0.7895" stop-color="#4c4c4c"/><stop offset="0.8526" stop-color="#3d3d3d"/><stop offset="0.8947" stop-color="#383838"/><stop offset="0.9474" stop-color="#363636"/><stop offset="1.0000" stop-color="#363636"/></linearGradient><linearGradient id="r39" gradientUnits="userSpaceOnUse" x1="150" y1="0" x2="1100" y2="0"><stop offset="0.0000" stop-color="#595959"/><stop offset="0.0211" stop-color="#595959"/><stop offset="0.1158" stop-color="#595959"/><stop offset="0.2632" stop-color="#616161"/><stop offset="0.3895" stop-color="#616161"/><stop offset="0.4316" stop-color="#616161"/><stop offset="0.4737" stop-color="#616161"/><stop offset="0.5579" stop-color="#616161"/><stop offset="0.6421" stop-color="#616161"/><stop offset="0.7074" stop-color="#595959"/><stop offset="0.7895" stop-color="#4c4c4c"/><stop offset="0.8526" stop-color="#3d3d3d"/><stop offset="0.8947" stop-color="#383838"/><stop offset="0.9474" stop-color="#363636"/><stop offset="1.0000" stop-color="#363636"/></linearGradient></defs><g clip-path="url(#imc)"><g filter="url(#vir)"><rect x="100" y="190" width="1200" height="900" fill="#080808"/><ellipse cx="140" cy="215" rx="110" ry="120" fill="#1a1a1a" filter="url(#b30)"/><ellipse cx="150" cy="1040" rx="170" ry="150" fill="#171717" filter="url(#b30)"/><rect x="1268" y="185" width="14" height="75" fill="#383838" filter="url(#b5)"/><rect x="1270" y="700" width="10" height="120" fill="#141414" filter="url(#b4)"/><path d="M1310,958 L1196,1100 L1310,1100 Z" fill="#474747" filter="url(#b8)"/><ellipse cx="1165" cy="1040" rx="30" ry="14" transform="rotate(25 1165 1040)" fill="#121212" filter="url(#b8)"/><linearGradient id="pen" gradientUnits="userSpaceOnUse" x1="640" y1="0" x2="1000" y2="0"><stop offset="0" stop-color="#171717" stop-opacity="0"/><stop offset="1" stop-color="#171717" stop-opacity=".85"/></linearGradient><path d="M1090,950 L874,985 L640,1030" stroke="url(#pen)" stroke-width="46" fill="none" filter="url(#b8)"/><path d="M1083,939 L1083,990" stroke="#141414" stroke-width="14" fill="none" filter="url(#b8)" opacity=".6"/><path d="M1090,200 L1083,940" stroke="#121212" stroke-width="10" fill="none" filter="url(#b4)"/><defs><g id="fld"><g filter="url(#bv)"><rect x="100" y="152" width="1020" height="25" fill="url(#r0)"/><rect x="100" y="176" width="1020" height="25" fill="url(#r1)"/><rect x="100" y="200" width="1020" height="25" fill="url(#r2)"/><rect x="100" y="224" width="1020" height="25" fill="url(#r3)"/><rect x="100" y="248" width="1020" height="25" fill="url(#r4)"/><rect x="100" y="272" width="1020" height="25" fill="url(#r5)"/><rect x="100" y="296" width="1020" height="25" fill="url(#r6)"/><rect x="100" y="320" width="1020" height="25" fill="url(#r7)"/><rect x="100" y="344" width="1020" height="25" fill="url(#r8)"/><rect x="100" y="368" width="1020" height="25" fill="url(#r9)"/><rect x="100" y="392" width="1020" height="25" fill="url(#r10)"/><rect x="100" y="416" width="1020" height="25" fill="url(#r11)"/><rect x="100" y="440" width="1020" height="25" fill="url(#r12)"/><rect x="100" y="464" width="1020" height="25" fill="url(#r13)"/><rect x="100" y="488" width="1020" height="25" fill="url(#r14)"/><rect x="100" y="512" width="1020" height="25" fill="url(#r15)"/><rect x="100" y="536" width="1020" height="25" fill="url(#r16)"/><rect x="100" y="560" width="1020" height="25" fill="url(#r17)"/><rect x="100" y="584" width="1020" height="25" fill="url(#r18)"/><rect x="100" y="608" width="1020" height="25" fill="url(#r19)"/><rect x="100" y="632" width="1020" height="25" fill="url(#r20)"/><rect x="100" y="656" width="1020" height="25" fill="url(#r21)"/><rect x="100" y="680" width="1020" height="25" fill="url(#r22)"/><rect x="100" y="704" width="1020" height="25" fill="url(#r23)"/><rect x="100" y="728" width="1020" height="25" fill="url(#r24)"/><rect x="100" y="752" width="1020" height="25" fill="url(#r25)"/><rect x="100" y="776" width="1020" height="25" fill="url(#r26)"/><rect x="100" y="800" width="1020" height="25" fill="url(#r27)"/><rect x="100" y="824" width="1020" height="25" fill="url(#r28)"/><rect x="100" y="848" width="1020" height="25" fill="url(#r29)"/><rect x="100" y="872" width="1020" height="25" fill="url(#r30)"/><rect x="100" y="896" width="1020" height="25" fill="url(#r31)"/><rect x="100" y="920" width="1020" height="25" fill="url(#r32)"/><rect x="100" y="944" width="1020" height="25" fill="url(#r33)"/><rect x="100" y="968" width="1020" height="25" fill="url(#r34)"/><rect x="100" y="992" width="1020" height="25" fill="url(#r35)"/><rect x="100" y="1016" width="1020" height="25" fill="url(#r36)"/><rect x="100" y="1040" width="1020" height="25" fill="url(#r37)"/><rect x="100" y="1064" width="1020" height="25" fill="url(#r38)"/><rect x="100" y="1088" width="1020" height="25" fill="url(#r39)"/></g><path d="M735,190 L743,205 L1095,300 L1095,190 Z" fill="#303030" filter="url(#b8)" opacity=".92"/><path d="M940,185 L1100,185 L1100,285 Z" fill="#1f1f1f" filter="url(#b16)" opacity=".8"/><linearGradient id="fw" gradientUnits="userSpaceOnUse" x1="560" y1="0" x2="1000" y2="0"><stop offset="0" stop-color="#fff" stop-opacity="1"/><stop offset="1" stop-color="#fff" stop-opacity="0"/></linearGradient><linearGradient id="fk" gradientUnits="userSpaceOnUse" x1="560" y1="0" x2="1050" y2="0"><stop offset="0" stop-color="#000" stop-opacity="1"/><stop offset="1" stop-color="#000" stop-opacity="0.15"/></linearGradient><path d="M178,376 L523,404 L895,442.5 L1090,462 L1090,757 L847,770 L541,789 L178,816 Z" fill="url(#fw)" opacity=".04" filter="url(#b2)"/><g stroke="url(#fk)" fill="none" opacity=".11" filter="url(#b2)"><path d="M178.5,300 L178.5,1000" stroke-width="3" stroke="#000" opacity="1.8"/><path d="M523,205 L522.5,400" stroke-width="4" opacity=".5" stroke="#000"/><path d="M522.5,400 L521,1000" stroke-width="4" stroke="#000"/><path d="M158,375 L523,404 L895,442.5 L1084,462" stroke-width="5"/><path d="M158,817 L541,789 L847,770 L1080,757" stroke-width="5"/></g><path d="M178.5,310 L178.5,990" stroke="#000" stroke-width="2.5" opacity=".1" filter="url(#b2)"/><path d="M172.5,380 L172.5,810" stroke="#fff" stroke-width="1.6" opacity=".07"/></g></defs><g clip-path="url(#soft)"><g filter="url(#b6)"><g clip-path="url(#wf)"><use href="#fld"/></g></g></g><g filter="url(#b2)"><g clip-path="url(#wc)"><use href="#fld"/></g></g><linearGradient id="arcg" gradientUnits="userSpaceOnUse" x1="0" y1="440" x2="0" y2="785"><stop offset="0.000" stop-color="#080808" stop-opacity="0"/><stop offset="0.087" stop-color="#1f1f1f" stop-opacity="0.7"/><stop offset="0.174" stop-color="#383838" stop-opacity="1"/><stop offset="0.290" stop-color="#595959" stop-opacity="1"/><stop offset="0.406" stop-color="#7a7a7a" stop-opacity="1"/><stop offset="0.493" stop-color="#999999" stop-opacity="1"/><stop offset="0.545" stop-color="#cccccc" stop-opacity="1"/><stop offset="0.580" stop-color="#f7f7f7" stop-opacity="1"/><stop offset="0.614" stop-color="#ffffff" stop-opacity="1"/><stop offset="0.661" stop-color="#e0e0e0" stop-opacity="1"/><stop offset="0.725" stop-color="#9e9e9e" stop-opacity="1"/><stop offset="0.797" stop-color="#6b6b6b" stop-opacity="1"/><stop offset="0.870" stop-color="#454545" stop-opacity="1"/><stop offset="0.942" stop-color="#1f1f1f" stop-opacity="0.6"/><stop offset="1.000" stop-color="#080808" stop-opacity="0"/></linearGradient><ellipse cx="1090" cy="640" rx="16" ry="80" fill="#262626" filter="url(#b8)" opacity=".8"/><path d="M1136,445 Q1216,600 1136,778" fill="none" stroke="#333333" stroke-width="24" filter="url(#b8)" opacity=".55"/><path d="M1138,448 Q1216,600 1138,775" fill="none" stroke="url(#arcg)" stroke-width="16" filter="url(#b4)"/></g></g><g stroke="#b0b0b0" stroke-width="1.1" fill="none"><path d="M255.6,105.5V1075.5"/><path d="M397.3,105.5V1075.5"/><path d="M539.0,105.5V1075.5"/><path d="M680.6,105.5V1075.5"/><path d="M822.3,105.5V1075.5"/><path d="M964.0,105.5V1075.5"/><path d="M1105.7,105.5V1075.5"/><path d="M1247.4,105.5V1075.5"/><path d="M113.5,205.1H1274.5"/><path d="M113.5,318.4H1274.5"/><path d="M113.5,431.7H1274.5"/><path d="M113.5,545.1H1274.5"/><path d="M113.5,658.4H1274.5"/><path d="M113.5,771.7H1274.5"/><path d="M113.5,885.0H1274.5"/><path d="M113.5,998.3H1274.5"/></g><g clip-path="url(#axc)"><path d="M525.2,406.5 L553.2,406.5 L547.6,412.1 L530.8,412.1 L530.8,428.9 L525.2,434.5Z M877.3,442.3 L849.3,442.3 L854.9,447.9 L871.7,447.9 L871.7,464.7 L877.3,470.3Z M522.0,791.5 L550.0,791.5 L544.4,785.9 L527.6,785.9 L527.6,769.1 L522.0,763.5Z M875.3,770.2 L847.3,770.2 L852.9,764.6 L869.7,764.6 L869.7,747.8 L875.3,742.2Z" fill="none" stroke="#f00" stroke-width="2" stroke-linejoin="round"/><path d="M714.4,602.7 L715.3,444.6 L724.8,444.7 L714.9,430.4 L704.8,444.5 L714.3,444.6 L713.4,602.7Z M713.4,602.7 L711.7,760.6 L702.2,760.5 L712.0,774.8 L722.2,760.7 L712.7,760.6 L714.4,602.7Z M713.9,602.2 L542.2,598.5 L542.4,589.0 L528.0,598.7 L542.0,609.0 L542.2,599.5 L713.9,603.2Z M713.9,603.2 L856.3,605.9 L856.1,615.4 L870.5,605.7 L856.5,595.4 L856.3,604.9 L713.9,602.2Z" fill="#f00" stroke="#f00" stroke-width="2" stroke-linejoin="round"/></g><path d="M244.7,151.5 L1117.3,274.0 L1156.5,980.1 L278.3,999.4 Z" fill="none" stroke="#ffa500" stroke-width="2" stroke-dasharray="7.4 3.2"/><rect x="113.5" y="105.5" width="1161" height="970" fill="none" stroke="#000" stroke-width="1.1"/><g stroke="#000" stroke-width="1.1"><path d="M113.9,1076V1080.7"/><path d="M255.6,1076V1080.7"/><path d="M397.3,1076V1080.7"/><path d="M539.0,1076V1080.7"/><path d="M680.6,1076V1080.7"/><path d="M822.3,1076V1080.7"/><path d="M964.0,1076V1080.7"/><path d="M1105.7,1076V1080.7"/><path d="M1247.4,1076V1080.7"/><path d="M113,205.1H108.3"/><path d="M113,318.4H108.3"/><path d="M113,431.7H108.3"/><path d="M113,545.1H108.3"/><path d="M113,658.4H108.3"/><path d="M113,771.7H108.3"/><path d="M113,885.0H108.3"/><path d="M113,998.3H108.3"/></g><g font-family="'DejaVu Sans','Liberation Sans',sans-serif" font-size="13.7" fill="#000"><text x="113.9" y="1096.2" text-anchor="middle">0</text><text x="255.6" y="1096.2" text-anchor="middle">250</text><text x="397.3" y="1096.2" text-anchor="middle">500</text><text x="539.0" y="1096.2" text-anchor="middle">750</text><text x="680.6" y="1096.2" text-anchor="middle">1000</text><text x="822.3" y="1096.2" text-anchor="middle">1250</text><text x="964.0" y="1096.2" text-anchor="middle">1500</text><text x="1105.7" y="1096.2" text-anchor="middle">1750</text><text x="1247.4" y="1096.2" text-anchor="middle">2000</text><text x="103.4" y="210.1" text-anchor="end">0</text><text x="103.4" y="323.4" text-anchor="end">200</text><text x="103.4" y="436.7" text-anchor="end">400</text><text x="103.4" y="550.1" text-anchor="end">600</text><text x="103.4" y="663.4" text-anchor="end">800</text><text x="103.4" y="776.7" text-anchor="end">1000</text><text x="103.4" y="890.0" text-anchor="end">1200</text><text x="103.4" y="1003.3" text-anchor="end">1400</text></g></svg><svg class="ic" style="left:20.0px" viewBox="0 0 72 72"><path d="M 57.86 45.94 C 57.86 45.87 57.86 45.79 57.82 45.72 L 35.99 27.73 L 14.18 45.72 C 14.18 45.79 14.14 45.87 14.14 45.94 L 14.14 64.15 C 14.14 65.48 15.24 66.58 16.57 66.58 L 31.14 66.58 L 31.14 52.02 L 40.86 52.02 L 40.86 66.58 L 55.43 66.58 C 56.76 66.58 57.86 65.48 57.86 64.15 z M 66.32 43.33 C 66.73 42.83 66.66 42.03 66.17 41.62 L 57.86 34.71 L 57.86 19.23 C 57.86 18.55 57.33 18.02 56.64 18.02 L 49.36 18.02 C 48.67 18.02 48.14 18.55 48.14 19.23 L 48.14 26.62 L 38.88 18.89 C 37.29 17.56 34.71 17.56 33.12 18.89 L 5.83 41.62 C 5.34 42.03 5.27 42.83 5.68 43.33 L 8.03 46.13 C 8.22 46.35 8.53 46.51 8.83 46.55 C 9.17 46.59 9.47 46.47 9.74 46.28 L 35.99 24.39 L 62.26 46.28 C 62.48 46.47 62.75 46.55 63.06 46.55 C 63.09 46.55 63.13 46.55 63.17 46.55 C 63.47 46.51 63.78 46.35 63.97 46.13 z" fill="#000"/></svg><svg class="ic" style="left:53.0px" viewBox="0 0 72 72"><path d="M 65.14 35.01 C 65.14 32.42 63.43 30.15 60.7 30.15 L 33.99 30.15 L 45.11 19.04 C 46.02 18.12 46.55 16.87 46.55 15.58 C 46.55 14.29 46.02 13.03 45.11 12.13 L 42.26 9.32 C 41.34 8.41 40.13 7.88 38.85 7.88 C 37.55 7.88 36.3 8.41 35.39 9.32 L 10.69 33.99 C 9.82 34.9 9.29 36.14 9.29 37.44 C 9.29 38.73 9.82 39.98 10.69 40.85 L 35.39 65.6 C 36.3 66.47 37.55 67 38.85 67 C 40.13 67 41.39 66.47 42.26 65.6 L 45.11 62.71 C 46.02 61.84 46.55 60.58 46.55 59.3 C 46.55 58.01 46.02 56.76 45.11 55.88 L 33.99 44.73 L 60.7 44.73 C 63.43 44.73 65.14 42.44 65.14 39.86 z" fill="#5a5a5a"/></svg><svg class="ic" style="left:85.6px" viewBox="0 0 72 72"><path d="M 62.71 37.44 C 62.71 36.14 62.22 34.9 61.31 34.02 L 36.61 9.32 C 35.69 8.41 34.44 7.88 33.15 7.88 C 31.87 7.88 30.64 8.41 29.74 9.32 L 26.89 12.16 C 25.98 13.03 25.45 14.29 25.45 15.58 C 25.45 16.87 25.98 18.12 26.89 19 L 38.01 30.15 L 11.3 30.15 C 8.57 30.15 6.86 32.42 6.86 35.01 L 6.86 39.86 C 6.86 42.44 8.57 44.73 11.3 44.73 L 38.01 44.73 L 26.89 55.84 C 25.98 56.76 25.45 58.01 25.45 59.3 C 25.45 60.58 25.98 61.84 26.89 62.75 L 29.74 65.6 C 30.64 66.47 31.87 67 33.15 67 C 34.44 67 35.69 66.47 36.61 65.6 L 61.31 40.89 C 62.22 39.98 62.71 38.73 62.71 37.44" fill="#5a5a5a"/></svg><svg class="ic" style="left:126.0px" viewBox="0 0 72 72"><path d="M 70 37.44 C 70 36.8 69.73 36.19 69.28 35.74 L 59.57 26.02 C 59.11 25.56 58.5 25.3 57.86 25.3 C 56.53 25.3 55.43 26.4 55.43 27.73 L 55.43 32.58 L 40.86 32.58 L 40.86 18.02 L 45.71 18.02 C 47.04 18.02 48.14 16.91 48.14 15.58 C 48.14 14.94 47.88 14.33 47.42 13.87 L 37.71 4.16 C 37.25 3.71 36.65 3.44 36 3.44 C 35.35 3.44 34.75 3.71 34.29 4.16 L 24.58 13.87 C 24.12 14.33 23.86 14.94 23.86 15.58 C 23.86 16.91 24.96 18.02 26.29 18.02 L 31.14 18.02 L 31.14 32.58 L 16.57 32.58 L 16.57 27.73 C 16.57 26.4 15.47 25.3 14.14 25.3 C 13.5 25.3 12.89 25.56 12.43 26.02 L 2.72 35.74 C 2.27 36.19 2 36.8 2 37.44 C 2 38.09 2.27 38.69 2.72 39.15 L 12.43 48.86 C 12.89 49.32 13.5 49.58 14.14 49.58 C 15.47 49.58 16.57 48.49 16.57 47.16 L 16.57 42.3 L 31.14 42.3 L 31.14 56.87 L 26.29 56.87 C 24.96 56.87 23.86 57.97 23.86 59.3 C 23.86 59.94 24.12 60.55 24.58 61.01 L 34.29 70.72 C 34.75 71.17 35.35 71.44 36 71.44 C 36.65 71.44 37.25 71.17 37.71 70.72 L 47.42 61.01 C 47.88 60.55 48.14 59.94 48.14 59.3 C 48.14 57.97 47.04 56.87 45.71 56.87 L 40.86 56.87 L 40.86 42.3 L 55.43 42.3 L 55.43 47.16 C 55.43 48.49 56.53 49.58 57.86 49.58 C 58.5 49.58 59.11 49.32 59.57 48.86 L 69.28 39.15 C 69.73 38.69 70 38.09 70 37.44" fill="#000"/></svg><svg class="ic" style="left:159.0px" viewBox="0 0 72 72"><path d="M 48.14 32.59 C 48.14 41.96 40.51 49.59 31.14 49.59 C 21.77 49.59 14.14 41.96 14.14 32.59 C 14.14 23.22 21.77 15.59 31.14 15.59 C 40.51 15.59 48.14 23.22 48.14 32.59 M 67.57 64.16 C 67.57 62.87 67.04 61.62 66.17 60.75 L 53.15 47.73 C 56.22 43.29 57.86 37.98 57.86 32.59 C 57.86 17.82 45.91 5.87 31.14 5.87 C 16.38 5.87 4.43 17.82 4.43 32.59 C 4.43 47.35 16.38 59.3 31.14 59.3 C 36.53 59.3 41.84 57.66 46.28 54.59 L 59.3 67.58 C 60.17 68.48 61.42 69.01 62.72 69.01 C 65.37 69.01 67.57 66.81 67.57 64.16" fill="#000"/></svg><svg class="ic" style="left:192.0px" viewBox="0 0 72 72"><path d="M 20.21 56.87 L 6.86 56.87 L 6.86 61.73 L 20.21 61.73 z M 33.57 52.02 L 23.86 52.02 C 22.53 52.02 21.42 53.11 21.42 54.44 L 21.42 64.16 C 21.42 65.49 22.53 66.58 23.86 66.58 L 33.57 66.58 C 34.9 66.58 36 65.49 36 64.16 L 36 54.44 C 36 53.11 34.9 52.02 33.57 52.02 M 39.64 37.44 L 6.86 37.44 L 6.86 42.3 L 39.64 42.3 z M 15.36 18.02 L 6.86 18.02 L 6.86 22.87 L 15.36 22.87 z M 65.14 56.87 L 37.21 56.87 L 37.21 61.73 L 65.14 61.73 z M 28.71 13.16 L 19 13.16 C 17.67 13.16 16.57 14.26 16.57 15.58 L 16.57 25.3 C 16.57 26.62 17.67 27.73 19 27.73 L 28.71 27.73 C 30.04 27.73 31.14 26.62 31.14 25.3 L 31.14 15.58 C 31.14 14.26 30.04 13.16 28.71 13.16 M 53 32.58 L 43.29 32.58 C 41.96 32.58 40.86 33.69 40.86 35.02 L 40.86 44.73 C 40.86 46.06 41.96 47.16 43.29 47.16 L 53 47.16 C 54.33 47.16 55.42 46.06 55.42 44.73 L 55.42 35.02 C 55.42 33.69 54.33 32.58 53 32.58 M 65.14 37.44 L 56.64 37.44 L 56.64 42.3 L 65.14 42.3 z M 65.14 18.02 L 32.36 18.02 L 32.36 22.87 L 65.14 22.87 z" fill="#000"/></svg><svg class="ic" style="left:225.0px" viewBox="0 0 72 72"><path d="M 74.86 61.73 L 2 61.73 L 2 8.3 L -2.86 8.3 L -2.86 66.58 L 74.86 66.58 z M 70 14.37 C 70 13.69 69.47 13.16 68.79 13.16 L 52.28 13.16 C 51.22 13.16 50.65 14.45 51.45 15.24 L 56.04 19.83 L 38.43 37.44 L 29.59 28.6 C 29.09 28.11 28.34 28.11 27.84 28.6 L 5.64 50.8 L 12.93 58.08 L 28.71 42.3 L 37.56 51.15 C 38.05 51.63 38.8 51.63 39.3 51.15 L 63.33 27.12 L 67.92 31.71 C 68.71 32.51 70 31.94 70 30.87 z" fill="#000"/></svg><svg class="ic" style="left:265.0px" viewBox="0 0 72 72"><path d="M 21.42 61.73 L 21.42 47.16 L 50.57 47.16 L 50.57 61.73 z M 55.42 61.73 L 55.42 45.94 C 55.42 43.93 53.8 42.3 51.79 42.3 L 20.21 42.3 C 18.2 42.3 16.57 43.93 16.57 45.94 L 16.57 61.73 L 11.71 61.73 L 11.71 13.16 L 16.57 13.16 L 16.57 28.94 C 16.57 30.96 18.2 32.58 20.21 32.58 L 42.07 32.58 C 44.09 32.58 45.71 30.96 45.71 28.94 L 45.71 13.16 C 46.48 13.16 47.95 13.77 48.48 14.3 L 59.14 24.96 C 59.64 25.45 60.29 27.01 60.29 27.73 L 60.29 61.73 z M 40.86 26.52 C 40.86 27.16 40.28 27.73 39.64 27.73 L 32.36 27.73 C 31.71 27.73 31.14 27.16 31.14 26.52 L 31.14 14.37 C 31.14 13.72 31.71 13.16 32.36 13.16 L 39.64 13.16 C 40.28 13.16 40.86 13.72 40.86 14.37 z M 65.14 27.73 C 65.14 25.72 64.01 22.95 62.56 21.5 L 51.94 10.88 C 50.49 9.44 47.72 8.3 45.71 8.3 L 10.5 8.3 C 8.49 8.3 6.86 9.93 6.86 11.94 L 6.86 62.94 C 6.86 64.96 8.49 66.58 10.5 66.58 L 61.5 66.58 C 63.51 66.58 65.14 64.96 65.14 62.94 z" fill="#000"/></svg><div class="sep" style="left:118px"></div><div class="sep" style="left:257px"></div><div class="fr" style="top:69px;height:77px"></div><div class="lb" style="left:1392.6px;top:81px;width:81px;height:22px"></div><div class="in" style="left:1479px;top:80px"></div><div class="lb" style="left:1585.0px;top:81px;width:80px;height:22px"></div><div class="lb" style="left:1392.6px;top:111px;width:81px;height:22px"></div><div class="in" style="left:1479px;top:110px"></div><div class="lb" style="left:1585.0px;top:111px;width:80px;height:22px"></div><div class="cur" style="left:1519px;top:83px"></div><div class="fr" style="top:176px;height:412px"></div><div class="lb" style="left:1392.6px;top:188px;width:81px;height:22px"></div><div class="in" style="left:1479px;top:187px"></div><div class="lb" style="left:1585.0px;top:188px;width:50px;height:22px"></div><div class="lb" style="left:1392.6px;top:218px;width:81px;height:22px"></div><div class="in" style="left:1479px;top:217px"></div><div class="lb" style="left:1585.0px;top:218px;width:50px;height:22px"></div><div class="lb" style="left:1392.6px;top:247px;width:220px;height:20px"></div><div class="in" style="left:1499px;top:273px"></div><div class="lb" style="left:1600.0px;top:274px;width:12px;height:22px"></div><div class="in" style="left:1619px;top:273px"></div><div class="lb" style="left:1392.6px;top:303px;width:220px;height:20px"></div><div class="in" style="left:1499px;top:329px"></div><div class="lb" style="left:1600.0px;top:330px;width:12px;height:22px"></div><div class="in" style="left:1619px;top:329px"></div><div class="lb" style="left:1392.6px;top:359px;width:220px;height:20px"></div><div class="in" style="left:1499px;top:385px"></div><div class="lb" style="left:1600.0px;top:386px;width:12px;height:22px"></div><div class="in" style="left:1619px;top:385px"></div><div class="lb" style="left:1392.6px;top:415px;width:220px;height:20px"></div><div class="in" style="left:1499px;top:441px"></div><div class="lb" style="left:1600.0px;top:442px;width:12px;height:22px"></div><div class="in" style="left:1619px;top:441px"></div><div class="lb" style="left:1392.6px;top:471px;width:310px;height:20px"></div><div class="in" style="left:1499px;top:497px"></div><div class="lb" style="left:1600.0px;top:498px;width:12px;height:22px"></div><div class="in" style="left:1619px;top:497px"></div><div class="lb" style="left:1392.6px;top:527px;width:310px;height:20px"></div><div class="in" style="left:1499px;top:553px"></div><div class="lb" style="left:1600.0px;top:554px;width:12px;height:22px"></div><div class="in" style="left:1619px;top:553px"></div><div class="fr" style="top:619px;height:137px"></div><div class="lb" style="left:1392.6px;top:631px;width:81px;height:22px"></div><div class="in" style="left:1479px;top:630px"></div><div class="lb" style="left:1585.0px;top:631px;width:50px;height:22px"></div><div class="lb" style="left:1392.6px;top:661px;width:81px;height:22px"></div><div class="in" style="left:1479px;top:660px"></div><div class="lb" style="left:1585.0px;top:661px;width:50px;height:22px"></div><div class="lb" style="left:1392.6px;top:691px;width:81px;height:22px"></div><div class="in" style="left:1479px;top:690px"></div><div class="lb" style="left:1585.0px;top:691px;width:50px;height:22px"></div><div class="lb" style="left:1392.6px;top:721px;width:81px;height:22px"></div><div class="in" style="left:1479px;top:720px"></div><div class="lb" style="left:1585.0px;top:721px;width:50px;height:22px"></div><div class="bt" style="left:1381px;top:787px;width:113px"></div><div class="bt" style="left:1500px;top:787px;width:112px"></div><div class="bt" style="left:1618px;top:787px;width:113px"></div><div class="bt" style="left:1381px;top:818px;width:113px"></div><div class="bt" style="left:1500px;top:818px;width:112px"></div><div class="bt" style="left:1618px;top:818px;width:113px"></div><svg class="plot" width="1745" height="1129" viewBox="0 0 1745 1129" font-family="'DejaVu Sans','Liberation Sans',sans-serif" fill="#2e3436" xml:space="preserve" style="white-space:pre"><text x="1383.0" y="62.6" font-size="14.2">- Image</text><text x="1392.9" y="97.9" font-size="13.9">X size:</text><text x="1481.4" y="98.2" font-size="14.8">2048</text><text x="1585.3" y="97.9" font-size="13.9">pixel</text><text x="1392.9" y="127.9" font-size="13.9">Y size:</text><text x="1481.4" y="128.2" font-size="14.8">1536</text><text x="1585.3" y="127.9" font-size="13.9">pixel</text><text x="1383.0" y="169.8" font-size="14.2">- Fiducials</text><text x="1392.9" y="204.9" font-size="13.9">Width :</text><text x="1481.4" y="205.2" font-size="14.8">50.0</text><text x="1585.3" y="204.9" font-size="13.9">mm</text><text x="1392.9" y="234.9" font-size="13.9">Height:</text><text x="1481.4" y="235.2" font-size="14.8">50.0</text><text x="1585.3" y="234.9" font-size="13.9">mm</text><text x="1392.9" y="262.9" font-size="13.9">Top-Left &#160;pixel (x, y):</text><text x="1501.4" y="291.2" font-size="14.8">725.8</text><text x="1604.4" y="290.9" font-size="13.9">,</text><text x="1621.4" y="291.2" font-size="14.8">355.5</text><text x="1392.9" y="318.9" font-size="13.9">Top-Right pixel (x, y):</text><text x="1501.4" y="347.2" font-size="14.8">1347.0</text><text x="1604.4" y="346.9" font-size="13.9">,</text><text x="1621.4" y="347.2" font-size="14.8">418.7</text><text x="1392.9" y="374.9" font-size="13.9">Bot-Left &#160;pixel (x, y):</text><text x="1501.4" y="403.2" font-size="14.8">720.0</text><text x="1604.4" y="402.9" font-size="13.9">,</text><text x="1621.4" y="403.2" font-size="14.8">1035.0</text><text x="1392.9" y="430.9" font-size="13.9">Bot-Right pixel (x, y):</text><text x="1501.4" y="459.2" font-size="14.8">1343.4</text><text x="1604.4" y="458.9" font-size="13.9">,</text><text x="1621.4" y="459.2" font-size="14.8">997.4</text><text x="1392.9" y="486.9" font-size="13.9">Angle of incidence (x, y) [deg]:</text><text x="1501.4" y="515.2" font-size="14.8">0.0</text><text x="1604.4" y="514.9" font-size="13.9">,</text><text x="1621.4" y="515.2" font-size="14.8">0.0</text><text x="1392.9" y="542.9" font-size="13.9">Center offset (x, y) [mm]:</text><text x="1501.4" y="571.2" font-size="14.8">0.000</text><text x="1604.4" y="570.9" font-size="13.9">,</text><text x="1621.4" y="571.2" font-size="14.8">0.000</text><text x="1383.0" y="612.5" font-size="14.2">- Margins</text><text x="1392.9" y="647.9" font-size="13.9">Top &#160;&#160;&#160;:</text><text x="1481.4" y="648.2" font-size="14.8">400.0</text><text x="1585.3" y="647.9" font-size="13.9">pixel</text><text x="1392.9" y="677.9" font-size="13.9">Bottom :</text><text x="1481.4" y="678.2" font-size="14.8">400.0</text><text x="1585.3" y="677.9" font-size="13.9">pixel</text><text x="1392.9" y="707.9" font-size="13.9">Left &#160;&#160;:</text><text x="1481.4" y="708.2" font-size="14.8">500.0</text><text x="1585.3" y="707.9" font-size="13.9">pixel</text><text x="1392.9" y="737.9" font-size="13.9">Right &#160;:</text><text x="1481.4" y="738.2" font-size="14.8">500.0</text><text x="1585.3" y="737.9" font-size="13.9">pixel</text><text x="1437.5" y="805.5" font-size="14.2" text-anchor="middle">Reload</text><text x="1556.0" y="805.5" font-size="14.2" text-anchor="middle">Reset</text><text x="1674.5" y="805.5" font-size="14.2" text-anchor="middle">Default</text><text x="1437.5" y="836.5" font-size="14.2" text-anchor="middle">Apply</text><text x="1556.0" y="836.5" font-size="14.2" text-anchor="middle">OK</text><text x="1674.5" y="836.5" font-size="14.2" text-anchor="middle">Cancel</text><text transform="translate(870.8,20.9) scale(.94,1)" text-anchor="middle" font-family="'Liberation Sans','DejaVu Sans',sans-serif" font-weight="bold" font-size="12.9">Transform &amp; Trim</text></svg></body></html>
